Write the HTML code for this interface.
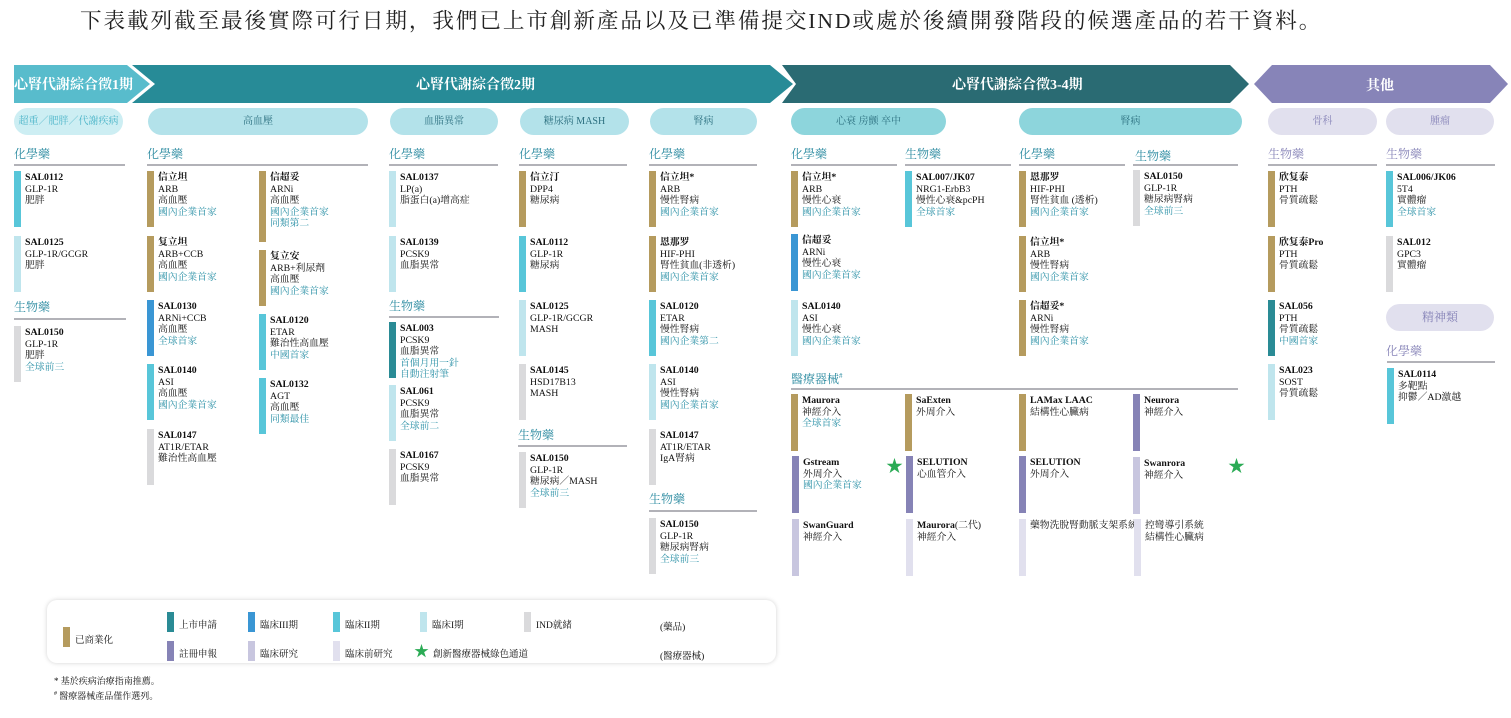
<!DOCTYPE html>
<html><head><meta charset="utf-8"><style>
*{margin:0;padding:0;box-sizing:border-box}
body{width:1511px;height:718px;background:#fff;position:relative;overflow:hidden;font-family:"Liberation Serif","Noto Serif CJK SC",serif;color:#111}
.t{position:absolute;left:80px;top:4px;font-size:21.6px;letter-spacing:1.9px;white-space:nowrap;color:#222}
.c{position:absolute;height:56px;width:110px;padding-left:11px;padding-top:1px;font-size:9.8px;line-height:11.6px;white-space:nowrap}
.c i{position:absolute;left:0;top:0;width:7px;height:100%}
.c b{font-weight:bold}
.h{color:#2a90a6}
.L{position:absolute;font-size:12px;color:#2a8aa0}
.ln{position:absolute;height:2px;background:#b2b2b8}
.p{position:absolute;height:27px;border-radius:14px;background:#b3e2ea;font-size:10px;line-height:27px;text-align:center;color:#2b6f7f}
.g1{background:#b59b5e}.dt{background:#2a8b95}.bl{background:#3a96d4}.cy{background:#58c6d9}.lt{background:#bfe5ed}.gr{background:#dadadc}.pu{background:#8683b6}.lv{background:#c8c6df}.vl{background:#e1e0ee}
.st{position:absolute;color:#2bab55;font-size:17px}
.lg{position:absolute;font-size:9.5px;white-space:nowrap}
.lg i{position:absolute;left:-12px;top:-5px;width:7px;height:20px}
</style></head><body>
<div class="t">下表載列截至最後實際可行日期，我們已上市創新產品以及已準備提交IND或處於後續開發階段的候選產品的若干資料。</div>

<svg style="position:absolute;left:0;top:0" width="1511" height="110">
<polygon points="14,65 127,65 150,84 127,103 14,103" fill="#58bccc"/>
<polygon points="132,65 770,65 793,84 770,103 132,103 155,84" fill="#278b97"/>
<polygon points="782,65 1230,65 1249,84 1230,103 782,103 796,84" fill="#2a6b73"/>
<polygon points="1272,65 1490,65 1508,84 1490,103 1272,103 1254,84" fill="#8784b8"/>
<g font-family="Liberation Serif,Noto Serif CJK SC,serif" font-size="14" fill="#fff" font-weight="bold">
<text x="14" y="89">心腎代謝綜合徵1期</text>
<text x="416" y="89">心腎代謝綜合徵2期</text>
<text x="952" y="89">心腎代謝綜合徵3-4期</text>
<text x="1366" y="90">其他</text></g>
</svg>

<div class="p" style="left:14px;top:108px;width:109px;background:#cdeef3;color:#4ab4c8">超重／肥胖／代謝疾病</div>
<div class="p" style="left:148px;top:108px;width:220px">高血壓</div>
<div class="p" style="left:390px;top:108px;width:108px">血脂異常</div>
<div class="p" style="left:520px;top:108px;width:109px">糖尿病 MASH</div>
<div class="p" style="left:650px;top:108px;width:107px">腎病</div>
<div class="p" style="left:791px;top:108px;width:155px;background:#8dd5dc">心衰 房颤 卒中</div>
<div class="p" style="left:1019px;top:108px;width:223px;background:#8dd5dc">腎病</div>
<div class="p" style="left:1268px;top:108px;width:109px;background:#e1e0ee;color:#8784b8">骨科</div>
<div class="p" style="left:1386px;top:108px;width:108px;background:#e1e0ee;color:#8784b8">腫瘤</div>
<div class="p" style="left:1386px;top:304px;width:108px;background:#e1e0ee;color:#8784b8;font-size:12px">精神類</div>

<div class="L" style="left:14px;top:145px">化學藥</div><div class="ln" style="left:14px;top:164px;width:111px"></div>
<div class="L" style="left:147px;top:145px">化學藥</div><div class="ln" style="left:147px;top:164px;width:221px"></div>
<div class="L" style="left:389px;top:145px">化學藥</div><div class="ln" style="left:389px;top:164px;width:109px"></div>
<div class="L" style="left:519px;top:145px">化學藥</div><div class="ln" style="left:519px;top:164px;width:108px"></div>
<div class="L" style="left:649px;top:145px">化學藥</div><div class="ln" style="left:649px;top:164px;width:108px"></div>
<div class="L" style="left:791px;top:145px">化學藥</div><div class="ln" style="left:791px;top:164px;width:106px"></div>
<div class="L" style="left:905px;top:145px">生物藥</div><div class="ln" style="left:905px;top:164px;width:106px"></div>
<div class="L" style="left:1019px;top:145px">化學藥</div><div class="ln" style="left:1019px;top:164px;width:106px"></div>
<div class="L" style="left:1135px;top:147px">生物藥</div><div class="ln" style="left:1133px;top:164px;width:105px"></div>
<div class="L" style="left:1268px;top:145px;color:#8784b8">生物藥</div><div class="ln" style="left:1268px;top:164px;width:109px"></div>
<div class="L" style="left:1386px;top:145px;color:#8784b8">生物藥</div><div class="ln" style="left:1386px;top:164px;width:109px"></div>
<div class="L" style="left:14px;top:298px">生物藥</div><div class="ln" style="left:14px;top:318px;width:112px"></div>
<div class="L" style="left:389px;top:297px">生物藥</div><div class="ln" style="left:389px;top:316px;width:110px"></div>
<div class="L" style="left:518px;top:426px">生物藥</div><div class="ln" style="left:518px;top:445px;width:109px"></div>
<div class="L" style="left:649px;top:490px">生物藥</div><div class="ln" style="left:649px;top:510px;width:108px"></div>
<div class="L" style="left:1386px;top:342px;color:#8784b8">化學藥</div><div class="ln" style="left:1387px;top:361px;width:108px"></div>
<div class="L" style="left:791px;top:370px">醫療器械<sup style="font-size:7px">#</sup></div><div class="ln" style="left:791px;top:388px;width:447px"></div>

<div class="c" style="left:14px;top:171px"><i class="cy"></i><b>SAL0112</b><br>GLP-1R<br>肥胖</div>
<div class="c" style="left:14px;top:236px"><i class="lt"></i><b>SAL0125</b><br>GLP-1R/GCGR<br>肥胖</div>
<div class="c" style="left:14px;top:326px"><i class="gr"></i><b>SAL0150</b><br>GLP-1R<br>肥胖<br><span class="h">全球前三</span></div>
<div class="c" style="left:147px;top:171px"><i class="g1"></i><b>信立坦</b><br>ARB<br>高血壓<br><span class="h">國內企業首家</span></div>
<div class="c" style="left:147px;top:236px"><i class="g1"></i><b>复立坦</b><br>ARB+CCB<br>高血壓<br><span class="h">國內企業首家</span></div>
<div class="c" style="left:147px;top:300px"><i class="bl"></i><b>SAL0130</b><br>ARNi+CCB<br>高血壓<br><span class="h">全球首家</span></div>
<div class="c" style="left:147px;top:364px"><i class="cy"></i><b>SAL0140</b><br>ASI<br>高血壓<br><span class="h">國內企業首家</span></div>
<div class="c" style="left:147px;top:429px"><i class="gr"></i><b>SAL0147</b><br>AT1R/ETAR<br>難治性高血壓</div>
<div class="c" style="left:259px;top:171px;height:71px"><i class="g1"></i><b>信超妥</b><br>ARNi<br>高血壓<br><span class="h">國內企業首家<br>同類第二</span></div>
<div class="c" style="left:259px;top:250px"><i class="g1"></i><b>复立安</b><br>ARB+利尿劑<br>高血壓<br><span class="h">國內企業首家</span></div>
<div class="c" style="left:259px;top:314px"><i class="cy"></i><b>SAL0120</b><br>ETAR<br>難治性高血壓<br><span class="h">中國首家</span></div>
<div class="c" style="left:259px;top:378px"><i class="cy"></i><b>SAL0132</b><br>AGT<br>高血壓<br><span class="h">同類最佳</span></div>
<div class="c" style="left:389px;top:171px"><i class="lt"></i><b>SAL0137</b><br>LP(a)<br>脂蛋白(a)增高症</div>
<div class="c" style="left:389px;top:236px"><i class="lt"></i><b>SAL0139</b><br>PCSK9<br>血脂異常</div>
<div class="c" style="left:389px;top:322px"><i class="dt"></i><b>SAL003</b><br>PCSK9<br>血脂異常<br><span class="h">首個月用一針<br>自動注射筆</span></div>
<div class="c" style="left:389px;top:385px"><i class="lt"></i><b>SAL061</b><br>PCSK9<br>血脂異常<br><span class="h">全球前二</span></div>
<div class="c" style="left:389px;top:449px"><i class="gr"></i><b>SAL0167</b><br>PCSK9<br>血脂異常</div>
<div class="c" style="left:519px;top:171px"><i class="g1"></i><b>信立汀</b><br>DPP4<br>糖尿病</div>
<div class="c" style="left:519px;top:236px"><i class="cy"></i><b>SAL0112</b><br>GLP-1R<br>糖尿病</div>
<div class="c" style="left:519px;top:300px"><i class="lt"></i><b>SAL0125</b><br>GLP-1R/GCGR<br>MASH</div>
<div class="c" style="left:519px;top:364px"><i class="gr"></i><b>SAL0145</b><br>HSD17B13<br>MASH</div>
<div class="c" style="left:519px;top:452px"><i class="gr"></i><b>SAL0150</b><br>GLP-1R<br>糖尿病／MASH<br><span class="h">全球前三</span></div>
<div class="c" style="left:649px;top:171px"><i class="g1"></i><b>信立坦*</b><br>ARB<br>慢性腎病<br><span class="h">國內企業首家</span></div>
<div class="c" style="left:649px;top:236px"><i class="g1"></i><b>恩那罗</b><br>HIF-PHI<br>腎性貧血(非透析)<br><span class="h">國內企業首家</span></div>
<div class="c" style="left:649px;top:300px"><i class="cy"></i><b>SAL0120</b><br>ETAR<br>慢性腎病<br><span class="h">國內企業第二</span></div>
<div class="c" style="left:649px;top:364px"><i class="lt"></i><b>SAL0140</b><br>ASI<br>慢性腎病<br><span class="h">國內企業首家</span></div>
<div class="c" style="left:649px;top:429px"><i class="gr"></i><b>SAL0147</b><br>AT1R/ETAR<br>IgA腎病</div>
<div class="c" style="left:649px;top:518px"><i class="gr"></i><b>SAL0150</b><br>GLP-1R<br>糖尿病腎病<br><span class="h">全球前三</span></div>
<div class="c" style="left:791px;top:171px"><i class="g1"></i><b>信立坦*</b><br>ARB<br>慢性心衰<br><span class="h">國內企業首家</span></div>
<div class="c" style="left:791px;top:234px;height:57px"><i class="bl"></i><b>信超妥</b><br>ARNi<br>慢性心衰<br><span class="h">國內企業首家</span></div>
<div class="c" style="left:791px;top:300px"><i class="lt"></i><b>SAL0140</b><br>ASI<br>慢性心衰<br><span class="h">國內企業首家</span></div>
<div class="c" style="left:905px;top:171px"><i class="cy"></i><b>SAL007/JK07</b><br>NRG1-ErbB3<br>慢性心衰&amp;pcPH<br><span class="h">全球首家</span></div>
<div class="c" style="left:1019px;top:171px"><i class="g1"></i><b>恩那罗</b><br>HIF-PHI<br>腎性貧血 (透析)<br><span class="h">國內企業首家</span></div>
<div class="c" style="left:1019px;top:236px"><i class="g1"></i><b>信立坦*</b><br>ARB<br>慢性腎病<br><span class="h">國內企業首家</span></div>
<div class="c" style="left:1019px;top:300px"><i class="g1"></i><b>信超妥*</b><br>ARNi<br>慢性腎病<br><span class="h">國內企業首家</span></div>
<div class="c" style="left:1133px;top:170px"><i class="gr"></i><b>SAL0150</b><br>GLP-1R<br>糖尿病腎病<br><span class="h">全球前三</span></div>
<div class="c" style="left:791px;top:394px;height:57px"><i class="g1"></i><b>Maurora</b><br>神經介入<br><span class="h">全球首家</span></div>
<div class="c" style="left:905px;top:394px;height:57px"><i class="g1"></i><b>SaExten</b><br>外周介入</div>
<div class="c" style="left:1019px;top:394px;height:57px"><i class="g1"></i><b>LAMax LAAC</b><br>結構性心臟病</div>
<div class="c" style="left:1133px;top:394px;height:57px"><i class="pu"></i><b>Neurora</b><br>神經介入</div>
<div class="c" style="left:792px;top:456px;height:57px"><i class="pu"></i><b>Gstream</b><br>外周介入<br><span class="h">國內企業首家</span></div>
<div class="c" style="left:906px;top:456px;height:57px"><i class="pu"></i><b>SELUTION</b><br>心血管介入</div>
<div class="c" style="left:1019px;top:456px;height:57px"><i class="pu"></i><b>SELUTION</b><br>外周介入</div>
<div class="c" style="left:1133px;top:457px;height:57px"><i class="lv"></i><b>Swanrora</b><br>神經介入</div>
<div class="c" style="left:792px;top:519px;height:57px"><i class="lv"></i><b>SwanGuard</b><br>神經介入</div>
<div class="c" style="left:906px;top:519px;height:57px"><i class="vl"></i><b>Maurora</b>(二代)<br>神經介入</div>
<div class="c" style="left:1019px;top:519px;height:57px"><i class="vl"></i>藥物洗脫腎動脈支架系統</div>
<div class="c" style="left:1134px;top:519px;height:57px"><i class="vl"></i>控彎導引系統<br>結構性心臟病</div>
<div class="st" style="left:886px;top:452px">★</div>
<div class="st" style="left:1228px;top:452px">★</div>
<div class="c" style="left:1268px;top:171px"><i class="g1"></i><b>欣复泰</b><br>PTH<br>骨質疏鬆</div>
<div class="c" style="left:1268px;top:236px"><i class="g1"></i><b>欣复泰Pro</b><br>PTH<br>骨質疏鬆</div>
<div class="c" style="left:1268px;top:300px"><i class="dt"></i><b>SAL056</b><br>PTH<br>骨質疏鬆<br><span class="h">中國首家</span></div>
<div class="c" style="left:1268px;top:364px"><i class="lt"></i><b>SAL023</b><br>SOST<br>骨質疏鬆</div>
<div class="c" style="left:1386px;top:171px"><i class="cy"></i><b>SAL006/JK06</b><br>5T4<br>實體瘤<br><span class="h">全球首家</span></div>
<div class="c" style="left:1386px;top:236px"><i class="gr"></i><b>SAL012</b><br>GPC3<br>實體瘤</div>
<div class="c" style="left:1387px;top:368px"><i class="cy"></i><b>SAL0114</b><br>多靶點<br>抑鬱／AD激越</div>

<div style="position:absolute;left:47px;top:600px;width:729px;height:63px;background:#fff;border-radius:10px;box-shadow:0 0 5px rgba(0,0,0,0.18)"></div>
<div class="lg" style="left:75px;top:632px"><i class="g1"></i>已商業化</div>
<div class="lg" style="left:179px;top:617px"><i class="dt"></i>上市申請</div>
<div class="lg" style="left:260px;top:617px"><i class="bl"></i>臨床III期</div>
<div class="lg" style="left:345px;top:617px"><i class="cy"></i>臨床II期</div>
<div class="lg" style="left:432px;top:617px"><i class="lt"></i>臨床I期</div>
<div class="lg" style="left:536px;top:617px"><i class="gr"></i>IND就緒</div>
<div class="lg" style="left:660px;top:619px">(藥品)</div>
<div class="lg" style="left:179px;top:646px"><i class="pu"></i>註冊申報</div>
<div class="lg" style="left:260px;top:646px"><i class="lv"></i>臨床研究</div>
<div class="lg" style="left:345px;top:646px"><i class="vl"></i>臨床前研究</div>
<div class="st" style="left:414px;top:640px;font-size:15px">★</div>
<div class="lg" style="left:433px;top:646px">創新醫療器械綠色通道</div>
<div class="lg" style="left:660px;top:648px">(醫療器械)</div>
<div class="lg" style="left:54px;top:674px;font-size:9px">* 基於疾病治療指南推薦。</div>
<div class="lg" style="left:54px;top:689px;font-size:9px"><sup style="font-size:6px">#</sup> 醫療器械產品僅作選列。</div>
</body></html>
